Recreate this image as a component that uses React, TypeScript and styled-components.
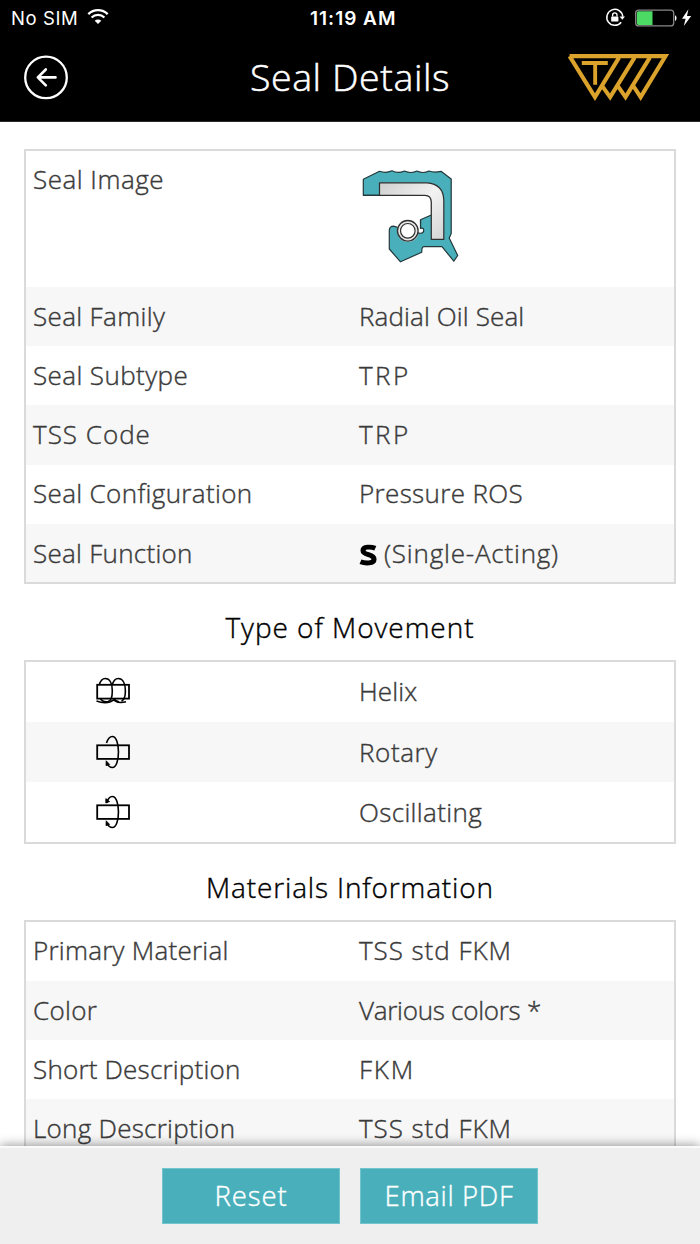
import React from 'react';
import styled, { createGlobalStyle } from 'styled-components';

const GlobalStyle = createGlobalStyle`
  * { box-sizing: border-box; }
  body { margin: 0; background: #fff; overflow: hidden; }
`;

const Screen = styled.div`
  width: 700px;
  height: 1244px;
  display: flex;
  flex-direction: column;
  overflow: hidden;
  background: #fff;
  color: #3a3a3a;
  font-family: 'Open Sans', 'Noto Sans', sans-serif;
  font-weight: 300;
  font-size: 26px;
  -webkit-text-stroke: 0.4px currentColor;
`;

const Header = styled.header`
  flex: none;
  height: 122px;
  background: #000;
  border-bottom: 1px solid #2b2b2b;
  color: #fff;
`;

const StatusBar = styled.div`
  height: 36px;
  display: grid;
  grid-template-columns: 1fr auto 1fr;
  align-items: center;
  padding: 0 8px 0 11px;
  font-family: Inter, sans-serif;
  font-size: 18.5px;
  -webkit-text-stroke: 0;
`;

const Carrier = styled.div`
  display: flex;
  align-items: center;
  gap: 9px;
  font-weight: 400;
  letter-spacing: 0.6px;
  svg { margin-top: -3px; }
`;

const Clock = styled.div`
  font-weight: 600;
  font-size: 19px;
  letter-spacing: 1px;
  margin-left: 6px;
  width: 89px;
  white-space: nowrap;
`;

const Indicators = styled.div`
  display: flex;
  justify-content: flex-end;
`;

const TitleBar = styled.div`
  height: 84px;
  display: grid;
  grid-template-columns: 110px 1fr 110px;
  align-items: center;
  padding: 0 22px;
`;

const BackButton = styled.button`
  width: 48px;
  height: 48px;
  padding: 0;
  border: 0;
  background: none;
  display: flex;
`;

const LogoSlot = styled.div`
  display: flex;
  margin: -1px 0 0 -2px;
`;

const Title = styled.h1<{ $track: number }>`
  margin: -4px 0 0;
  text-align: center;
  font-size: 37.5px;
  font-weight: 300;
  -webkit-text-stroke-width: 0.5px;
  letter-spacing: ${p => p.$track}px;
`;

const Content = styled.main`
  flex: 1;
  min-height: 0;
  overflow: hidden;
  padding: 27px 24px 0;
`;

const Table = styled.section`
  border: 2px solid #dadada;
`;

const Row = styled.div<{ $height: number; $top?: boolean; $shift?: number }>`
  height: ${p => p.$height}px;
  display: grid;
  grid-template-columns: 326px 1fr;
  align-items: ${p => (p.$top ? 'start' : 'center')};
  padding: ${p => (p.$top ? '10px 0 0' : `0 0 ${p.$shift ?? 2}px`)} 7px;
  &:nth-child(even) { background: #f7f7f7; }
`;

const Text = styled.span<{ $track?: number }>`
  line-height: 36px;
  white-space: nowrap;
  letter-spacing: ${p => p.$track ?? 0}px;
`;

const FunctionValue = styled.div`
  display: flex;
  align-items: center;
  gap: 7px;
  svg { margin-top: 5px; }
`;

const MovementIcon = styled.div`
  display: flex;
  padding-left: 62px;
`;

const SealDrawing = styled.div`
  display: flex;
  padding: 7px 0 0 3px;
`;

const Heading = styled.h2<{ $track: number }>`
  margin: 0;
  height: 75.6px;
  padding-top: 10px;
  display: flex;
  align-items: center;
  justify-content: center;
  color: #000;
  font-size: 28px;
  font-weight: 300;
  letter-spacing: ${p => p.$track}px;
`;

const Footer = styled.footer`
  flex: none;
  position: relative;
  height: 98px;
  display: flex;
  justify-content: center;
  gap: 20px;
  padding-top: 20px;
  background: #efefef;
  border-top: 2px solid #fafafa;
  box-shadow: 0 -1px 10px rgba(0, 0, 0, 0.4);
`;

const Action = styled.button<{ $track: number }>`
  width: 178px;
  height: 56px;
  padding: 0 0 2px;
  border: 1px solid #72c4cc;
  background: #48afbb;
  color: #fff;
  font: inherit;
  font-size: 27.5px;
  -webkit-text-stroke: 0.4px #fff;
  letter-spacing: ${p => p.$track}px;
`;

const WifiIcon = () => (
  <svg width="22" height="17" viewBox="0 0 22 17" fill="none" stroke="#fff">
    <path d="M1.3 6.1C6.7.7 15.3.7 20.7 6.1" strokeWidth="2.3" />
    <path d="M4.6 9.5c3.6-3.5 9.2-3.5 12.8 0" strokeWidth="2.3" />
    <path d="M7.7 12.8c1.9-1.8 4.7-1.8 6.6 0L11 16z" fill="#fff" stroke="none" />
  </svg>
);

const StatusIcons = () => (
  <svg width="88" height="22" viewBox="604 6.6 88 22" fill="none">
    <path d="M621.2 21.8A8 8 0 1 1 622.8 16.4" stroke="#fff" strokeWidth="1.5" />
    <path d="M619.6 16h5.4l-2.7 3.3z" fill="#fff" />
    <rect x="611.2" y="16" width="7.2" height="5.2" rx="0.6" fill="#fff" />
    <path d="M612.6 16.2v-1.6a2.2 2.2 0 0 1 4.4 0v1.6" stroke="#fff" strokeWidth="1.3" />
    <rect x="635.7" y="9.7" width="38" height="15.8" rx="3" stroke="#888" strokeWidth="1.3" />
    <path d="M638.5 10.8H652.5V24.5H638.5a1.6 1.6 0 0 1-1.6-1.6V12.4a1.6 1.6 0 0 1 1.6-1.6z" fill="#4cd964" />
    <path d="M675 14.8c2 .6 2 5 0 5.7z" fill="#fff" />
    <path d="M688.4 8.8 682 18.4h3.6l-1.8 7.2 7.4-10h-4.2z" fill="#fff" />
  </svg>
);

const BackIcon = () => (
  <svg width="48" height="48" viewBox="22 54 48 48" fill="none" stroke="#fff" strokeLinecap="round" strokeLinejoin="round">
    <circle cx="46" cy="77.4" r="20.8" strokeWidth="2.3" />
    <path d="M55.5 77.4H38M45.8 69.5 37.8 77.4 45.8 85.3" strokeWidth="2.6" />
  </svg>
);

const BrandLogo = () => (
  <svg width="104" height="49" viewBox="568 54 102 48" fill="none" stroke="#dba32b" strokeWidth="4">
    <path d="M571.5 57H665.6L641.2 97.2 633.6 85.6M571.5 57 596.4 97.2 620 58.5M603.2 86 611.3 97.2 635.2 58.5M618.6 86 626.4 97.2 650.2 58.5" strokeMiterlimit="10" />
    <path d="M583.5 63.8H609M596.6 64V85" strokeWidth="3.8" />
  </svg>
);

const SealIcon = () => (
  <svg width="98" height="96" viewBox="362 168 98 96" strokeLinejoin="round">
    <defs>
      <linearGradient id="metal" x1="0" y1="0" x2="1" y2="1">
        <stop offset="0" stopColor="#cfcfcf" />
        <stop offset="0.5" stopColor="#f2f2f2" />
        <stop offset="1" stopColor="#d4d4d4" />
      </linearGradient>
    </defs>
    <path d="M363.3 195.3V179.2L379.5 171.3Q386 173.5 392 170.8 398 174 404.5 171 411 174 417 171 423 174 429 171 434 173 441 171.3L451.2 179V233.5L449.2 238 457.7 255.5 453.8 261.2 442 246.6H424Q421.5 247 421.8 252.2L400.5 261.8 389.3 249V230Q389.8 226.3 393.5 226.2L397.5 227.3 420.5 229.5V219.8L431.3 215V195.3Z" fill="#48afbb" stroke="#24383b" strokeWidth="1.2" />
    <path d="M364 196H425Q430.6 196.5 430.7 202V214.6" fill="#fff" />
    <path d="M363.3 195.3H380" fill="none" stroke="#24383b" strokeWidth="1.2" />
    <path d="M379.5 195.3V182.8H427Q443.3 184 443.8 200V239.4H431.3V202Q431 195.3 425 195.3Z" fill="url(#metal)" stroke="#303030" strokeWidth="1.2" />
    <path d="M397.5 226.5C399 217 414 217 419 228.5L418.5 232.5C417.5 245 398 245 397.5 232Z" fill="#fff" />
    <path d="M420.5 220V228.3Q424 227.5 423.7 231 423 234.2 417.5 232.8V226Z" fill="#fff" />
    <path d="M420.5 220V228.3Q424 227.5 423.7 231 423 234.2 417.5 232.8" fill="none" stroke="#24383b" strokeWidth="1.2" />
    <circle cx="407.8" cy="230.8" r="10.3" fill="#e9e9e9" stroke="#303030" strokeWidth="1.3" />
    <circle cx="407.8" cy="230.8" r="7.3" fill="#fff" stroke="#303030" strokeWidth="1.2" />
  </svg>
);

const SingleIcon = () => (
  <svg width="18" height="22" viewBox="359.6 544 17 22" preserveAspectRatio="none" fill="none" stroke="#000" strokeWidth="4.8">
    <path d="M375 548.3C371 546.6 363.4 546.2 363.4 550.4 363.4 555.8 373.8 553.5 373.8 559.2 373.8 563.8 365.5 563.6 361 561.8" />
  </svg>
);

const HelixIcon = () => (
  <svg width="36" height="32" viewBox="95 676 36 32" fill="none" stroke="#000" strokeWidth="1.8">
    <rect x="97.2" y="685.8" width="31.8" height="13.8" />
    <path d="M99.2 686C100.5 681.5 102.5 679.5 105.3 679.5 110.5 679.5 112.3 686 112.3 692 112.3 697.5 111 702 108 702.6 104 703.2 101.5 701.5 100.3 699.5M112.2 686C113.5 681.5 115.5 679.5 118.2 679.5 123.5 679.5 125.4 686 125.4 692 125.4 697.5 124 701 121.5 702.4M113.8 699.5Q115.5 702.4 119 702.8" strokeWidth="1.6" />
    <path d="M96.5 702Q104 704.8 110.5 702.8L113.5 701Q118 704.8 126 702.8" strokeWidth="1.6" />
  </svg>
);

const RotaryIcon = ({ both = false }: { both?: boolean }) => (
  <svg width="36" height="36" viewBox="95 734 36 36" fill="none" stroke="#000">
    <rect x="97.2" y="745.3" width="31.8" height="13.6" strokeWidth="1.8" />
    <path d="M106.5 743C108 738.5 110 736.5 112.3 736.5 120.5 736.5 120.5 767.5 112.3 767.5 109.5 767.5 108 765.5 106.7 763.2" strokeWidth="1.6" />
    <path d="M106.2 760.8 109.6 764.4 106 765.6z" fill="#000" strokeWidth="0.8" />
    {both && <path d="M105.8 743V738.6L109.6 741.6z" fill="#000" strokeWidth="0.8" />}
  </svg>
);

type Item = { label: string; labelTrack?: number; value: string; valueTrack?: number };

const sealRows: Item[] = [
  { label: 'Seal Family', labelTrack: 0.35, value: 'Radial Oil Seal', valueTrack: 0.12 },
  { label: 'Seal Subtype', labelTrack: 0.4, value: 'TRP', valueTrack: 2.4 },
  { label: 'TSS Code', labelTrack: 1, value: 'TRP', valueTrack: 2.4 },
  { label: 'Seal Configuration', labelTrack: 0.35, value: 'Pressure ROS', valueTrack: 0.35 },
];

const materialRows: Item[] = [
  { label: 'Primary Material', labelTrack: 0.25, value: 'TSS std FKM', valueTrack: 0.95 },
  { label: 'Color', labelTrack: 0.3, value: 'Various colors *', valueTrack: -0.27 },
  { label: 'Short Description', labelTrack: 0.2, value: 'FKM', valueTrack: 1.8 },
  { label: 'Long Description', labelTrack: 0.27, value: 'TSS std FKM', valueTrack: 0.95 },
];

const DataRow = ({ label, labelTrack, value, valueTrack }: Item) => (
  <Row $height={59.2}>
    <Text $track={labelTrack}>{label}</Text>
    <Text $track={valueTrack}>{value}</Text>
  </Row>
);

export default function App() {
  return (
    <Screen>
      <GlobalStyle />
      <Header>
        <StatusBar>
          <Carrier>No SIM <WifiIcon /></Carrier>
          <Clock>11:19 AM</Clock>
          <Indicators><StatusIcons /></Indicators>
        </StatusBar>
        <TitleBar>
          <BackButton aria-label="Back"><BackIcon /></BackButton>
          <Title $track={0.6}>Seal Details</Title>
          <LogoSlot><BrandLogo /></LogoSlot>
        </TitleBar>
      </Header>
      <Content>
        <Table>
          <Row $height={136} $top>
            <Text $track={0.5}>Seal Image</Text>
            <SealDrawing><SealIcon /></SealDrawing>
          </Row>
          {sealRows.map(r => <DataRow key={r.label} {...r} />)}
          <Row $height={58.2} $shift={0}>
            <Text $track={0.27}>Seal Function</Text>
            <FunctionValue><SingleIcon /><Text $track={0.8}>(Single-Acting)</Text></FunctionValue>
          </Row>
        </Table>
        <Heading $track={0.95}>Type of Movement</Heading>
        <Table>
          <Row $height={60.3} $shift={1}><MovementIcon><HelixIcon /></MovementIcon><Text $track={0.1}>Helix</Text></Row>
          <Row $height={60.3} $shift={0}><MovementIcon><RotaryIcon /></MovementIcon><Text $track={0.6}>Rotary</Text></Row>
          <Row $height={60} $shift={0}><MovementIcon><RotaryIcon both /></MovementIcon><Text $track={0.35}>Oscillating</Text></Row>
        </Table>
        <Heading $track={0.85}>Materials Information</Heading>
        <Table>
          {materialRows.map(r => <DataRow key={r.label} {...r} />)}
        </Table>
      </Content>
      <Footer>
        <Action $track={0.9}>Reset</Action>
        <Action $track={0.65}>Email PDF</Action>
      </Footer>
    </Screen>
  );
}
